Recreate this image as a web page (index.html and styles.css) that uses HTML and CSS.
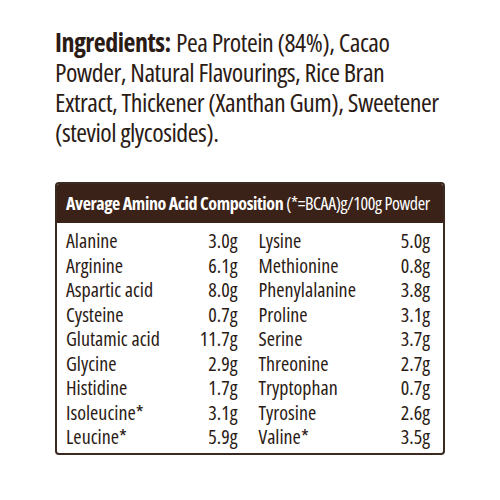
FILE: index.html
```html
<!DOCTYPE html>
<html lang="en">
<head>
    <meta charset="UTF-8">
    <title>Amino Acid Composition</title>
    <link rel="stylesheet" href="styles.css">
</head>
<body>
    <div class="label">
        <p class="ingredients"><strong>Ingredients:</strong> Pea Protein (84%), Cacao Powder, Natural Flavourings, Rice Bran Extract, Thickener (Xanthan Gum), Sweetener (steviol glycosides).</p>

        <div class="amino">
            <div class="amino-head"><strong>Average Amino Acid Composition</strong> (*=BCAA)g/100g Powder</div>
            <div class="amino-grid">
                <div class="pair"><span>Alanine</span><span>3.0g</span></div>
                <div class="pair"><span>Lysine</span><span>5.0g</span></div>
                <div class="pair"><span>Arginine</span><span>6.1g</span></div>
                <div class="pair"><span>Methionine</span><span>0.8g</span></div>
                <div class="pair"><span>Aspartic acid</span><span>8.0g</span></div>
                <div class="pair"><span>Phenylalanine</span><span>3.8g</span></div>
                <div class="pair"><span>Cysteine</span><span>0.7g</span></div>
                <div class="pair"><span>Proline</span><span>3.1g</span></div>
                <div class="pair"><span>Glutamic acid</span><span>11.7g</span></div>
                <div class="pair"><span>Serine</span><span>3.7g</span></div>
                <div class="pair"><span>Glycine</span><span>2.9g</span></div>
                <div class="pair"><span>Threonine</span><span>2.7g</span></div>
                <div class="pair"><span>Histidine</span><span>1.7g</span></div>
                <div class="pair"><span>Tryptophan</span><span>0.7g</span></div>
                <div class="pair"><span>Isoleucine*</span><span>3.1g</span></div>
                <div class="pair"><span>Tyrosine</span><span>2.6g</span></div>
                <div class="pair"><span>Leucine*</span><span>5.9g</span></div>
                <div class="pair"><span>Valine*</span><span>3.5g</span></div>
            </div>
        </div>
    </div>
</body>
</html>
```

FILE: styles.css
```css
body {
    margin: 0;
    background: #fff;
    font-family: "Open Sans", sans-serif;
    font-stretch: condensed;
    color: #2b1b15;
}

.label {
    width: 390px;
    padding: 27px 0 0 55px;
}

.ingredients {
    margin: 0 0 35px;
    font-size: 26px;
    line-height: 30px;
    letter-spacing: -0.5px;
}

.ingredients strong {
    font-weight: bold;
    margin-right: 1px;
}

.amino {
    border: 2px solid #3a2a22;
    border-radius: 4px;
    overflow: hidden;
}

.amino-head {
    background: #3b2218;
    color: #fff;
    height: 39px;
    line-height: 39px;
    padding-left: 9px;
    font-size: 18px;
    letter-spacing: -0.4px;
    white-space: nowrap;
}

.amino-grid {
    display: grid;
    grid-template-columns: 1fr 1fr;
    column-gap: 21px;
    padding: 6px 13px 3px 9px;
}

.pair {
    display: flex;
    justify-content: space-between;
    font-size: 20px;
    line-height: 24.5px;
}
```
